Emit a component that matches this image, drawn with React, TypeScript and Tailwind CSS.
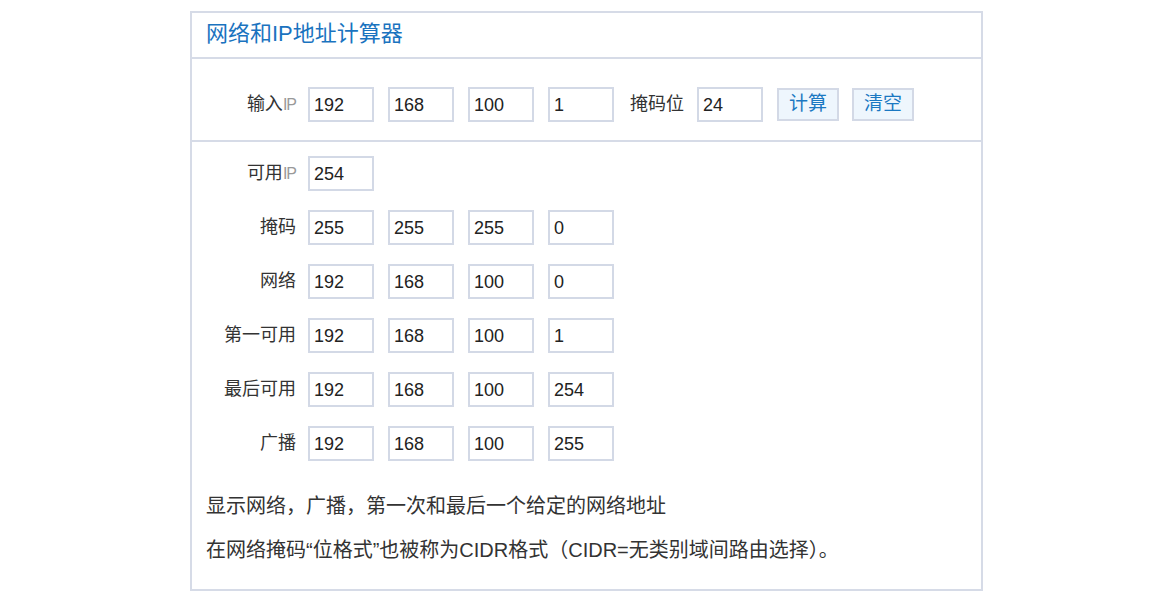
const font = { fontFamily: '"Liberation Sans", "Noto Sans CJK SC", sans-serif' };

type Row = { label: string; values: string[] };

const results: Row[] = [
  { label: '可用', values: ['254'] },
  { label: '掩码', values: ['255', '255', '255', '0'] },
  { label: '网络', values: ['192', '168', '100', '0'] },
  { label: '第一可用', values: ['192', '168', '100', '1'] },
  { label: '最后可用', values: ['192', '168', '100', '254'] },
  { label: '广播', values: ['192', '168', '100', '255'] },
];

const Box = ({ value }: { value: string }) => (
  <input
    readOnly
    value={value}
    className="w-[66px] h-[35px] border-2 border-[#d3d9e6] bg-white pl-1 pt-[2px] text-[18px] text-[#222] outline-none"
    style={font}
  />
);

const Label = ({ text }: { text: string }) => {
  const hasIp = text === '可用' || text === '输入';
  return (
    <div className="w-[116px] shrink-0 pr-[12px] text-right text-[18px] text-[#333]">
      {text}
      {hasIp && <span className="font-light text-[#999] tracking-[-1px] text-[16px]">IP</span>}
    </div>
  );
};

const Button = ({ text }: { text: string }) => (
  <button className="h-[33px] w-[62px] border-2 border-[#d3d9e6] bg-[#eef6fd] text-[19px] text-[#1a78c2]">
    {text}
  </button>
);

export default function App() {
  return (
    <div className="min-h-[595px] bg-white pt-[11px]" style={font}>
      <div className="ml-[190px] w-[793px] border-2 border-[#d6dbe7]">
        <div className="flex h-[46px] items-center border-b-2 border-[#d6dbe7] pl-[14px] pb-[4px] text-[22px] text-[#1a73bf]">
          网络和IP地址计算器
        </div>

        <div className="flex items-center border-b-2 border-[#d6dbe7] pt-[28px] pb-[18px]">
          <Label text="输入" />
          <div className="flex items-center gap-[14px]">
            <Box value="192" />
            <Box value="168" />
            <Box value="100" />
            <Box value="1" />
          </div>
          <span className="ml-[16px] mr-[13px] text-[18px] text-[#333]">掩码位</span>
          <Box value="24" />
          <div className="ml-[14px] flex gap-[13px]">
            <Button text="计算" />
            <Button text="清空" />
          </div>
        </div>

        <div className="flex flex-col gap-[19px] pt-[14px]">
          {results.map((row) => (
            <div key={row.label} className="flex items-center">
              <Label text={row.label} />
              <div className="flex gap-[14px]">
                {row.values.map((v, i) => (
                  <Box key={i} value={v} />
                ))}
              </div>
            </div>
          ))}
        </div>

        <div className="px-[14px] pt-[23px] pb-[17px] text-[20px] leading-[44px] text-[#333]">
          <p>显示网络，广播，第一次和最后一个给定的网络地址</p>
          <p>在网络掩码“位格式”也被称为CIDR格式（CIDR=无类别域间路由选择）。</p>
        </div>
      </div>
    </div>
  );
}
